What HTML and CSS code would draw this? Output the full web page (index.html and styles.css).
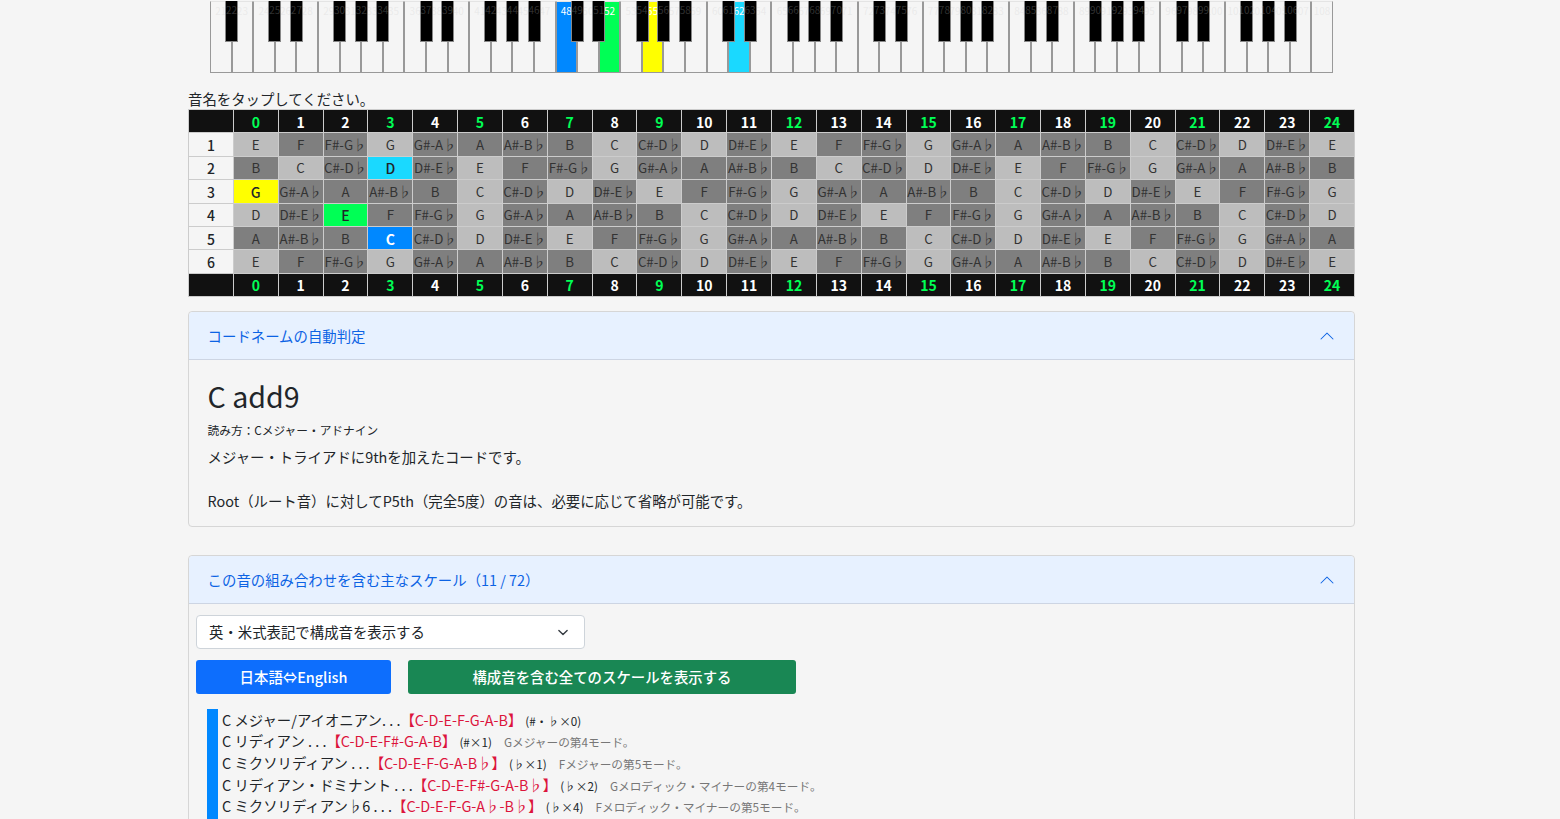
FILE: index.html
```html
<!DOCTYPE html>
<html lang="ja">
<head>
<meta charset="utf-8">
<title>コードネームの自動判定</title>
<link rel="stylesheet" href="styles.css">
</head>
<body>
<div class="page">
  <div class="piano" id="piano"></div>
  <div class="content">
    <p class="hint">音名をタップしてください。</p>
    <table class="board"><tbody id="board"></tbody></table>

    <section class="acc acc-first">
      <header class="acc-head">
        <span>コードネームの自動判定</span>
        <svg class="chev" viewBox="0 0 16 16" width="16" height="16"><path fill="#0c63e4" fill-rule="evenodd" d="M1.646 11.354a.5.5 0 0 0 .708 0L8 5.707l5.646 5.647a.5.5 0 0 0 .708-.708l-6-6a.5.5 0 0 0-.708 0l-6 6a.5.5 0 0 0 0 .708z"/></svg>
      </header>
      <div class="acc-body chord">
        <h2 class="chord-name">C add9</h2>
        <p class="reading">読み方：Cメジャー・アドナイン</p>
        <p class="desc">メジャー・トライアドに9thを加えたコードです。<br><br>Root（ルート音）に対してP5th（完全5度）の音は、必要に応じて省略が可能です。</p>
      </div>
    </section>

    <section class="acc acc-second">
      <header class="acc-head">
        <span>この音の組み合わせを含む主なスケール（11 / 72）</span>
        <svg class="chev" viewBox="0 0 16 16" width="16" height="16"><path fill="#0c63e4" fill-rule="evenodd" d="M1.646 11.354a.5.5 0 0 0 .708 0L8 5.707l5.646 5.647a.5.5 0 0 0 .708-.708l-6-6a.5.5 0 0 0-.708 0l-6 6a.5.5 0 0 0 0 .708z"/></svg>
      </header>
      <div class="acc-body scales">
        <div class="select">
          <span>英・米式表記で構成音を表示する</span>
          <svg viewBox="0 0 16 16" width="14" height="11"><path fill="none" stroke="#343a40" stroke-linecap="round" stroke-linejoin="round" stroke-width="2" d="M2 5l6 6 6-6"/></svg>
        </div>
        <div class="btns">
          <button class="btn btn-blue">日本語⇔English</button>
          <button class="btn btn-green">構成音を含む全てのスケールを表示する</button>
        </div>
        <ul class="list">
          <li>C メジャー/アイオニアン. . .<b>【C-D-E-F-G-A-B】</b><small>(#・♭×0)</small></li>
          <li>C リディアン . . .<b>【C-D-E-F#-G-A-B】</b><small>(#×1)</small><i>Gメジャーの第4モード。</i></li>
          <li>C ミクソリディアン . . .<b>【C-D-E-F-G-A-B♭】</b><small>(♭×1)</small><i>Fメジャーの第5モード。</i></li>
          <li>C リディアン・ドミナント . . .<b>【C-D-E-F#-G-A-B♭】</b><small>(♭×2)</small><i>Gメロディック・マイナーの第4モード。</i></li>
          <li>C ミクソリディアン♭6 . . .<b>【C-D-E-F-G-A♭-B♭】</b><small>(♭×4)</small><i>Fメロディック・マイナーの第5モード。</i></li>
        </ul>
      </div>
    </section>
  </div>
</div>
<script src="app.js"></script>
</body>
</html>
```
FILE: styles.css
```css
* { box-sizing: border-box; }
html, body { margin: 0; height: 819px; overflow: hidden; }
body {
  background: #f5f5f5;
  color: #212529;
  font-family: "Noto Sans CJK JP", "Noto Sans", sans-serif;
  font-size: 14.4px;
  line-height: 1.5;
}
.page { width: 1543px; }

/* piano */
.piano {
  position: relative;
  display: flex;
  width: 1123px;
  height: 73px;
  margin: 0 auto;
  padding-top: 1px;
}
.wk {
  position: relative;
  flex: 0 0 21.6px;
  border: 1px solid #999;
  border-top-color: #e4e4e4;
  font-size: 10px;
  line-height: 14px;
  text-align: center;
  color: rgba(200, 200, 200, .25);
  padding-top: 2px;
  white-space: nowrap;
}
.wk.on { color: #fff; }
.c-blue { background: #0088ff; }
.c-green { background: #00ff55; }
.c-yellow { background: #ffff00; }
.c-cyan { background: #1ad9ff; }
.bk {
  position: absolute;
  z-index: 1;
  top: 1px;
  width: 13px;
  height: 41px;
  background: #000;
  border: 1px solid #888;
  border-top: 0;
  font-size: 10px;
  line-height: 18px;
  text-align: center;
  color: rgba(200, 200, 200, .25);
  white-space: nowrap;
  display: flex;
  justify-content: center;
}

/* content */
.content { width: 1167px; margin: 0 auto; }
.hint { margin: 15px 0 0; height: 21px; line-height: 22px; }
.board {
  width: 100%;
  table-layout: fixed;
  border-collapse: collapse;
}
.board td {
  height: 23.4px;
  padding: 1px 0 0;
  border: 1px solid #ccc;
  text-align: center;
  font-size: 13.3px;
  line-height: 16px;
  color: #333;
  white-space: nowrap;
  overflow: hidden;
}
.board .hd { background: #111; color: #fff; font-weight: 700; font-size: 14px; }
.board .hd.mark { color: #00ff55; }
.board .lbl { background: #f5f5f5; color: #212529; font-weight: 500; font-size: 14px; }
.board .lt { background: #bdbdbd; }
.board .dk { background: #7f7f7f; }
.board .sel { font-weight: 500; color: #212529; font-size: 14px; }
.board .c-blue { color: #fff; font-weight: 700; }

/* accordion */
.acc {
  border: 1px solid #d6d6d6;
  border-radius: 4px;
}
.acc-first { margin-top: 14px; }
.acc-second { margin-top: 28px; }
.acc-head {
  display: flex;
  align-items: center;
  justify-content: space-between;
  height: 48px;
  padding: 0 19px 0 18.6px;
  background: #e7f1ff;
  color: #0c63e4;
  border-bottom: 1px solid #cdd5e3;
  border-radius: 4px 4px 0 0;
}
.chord { padding: 14px 19px 14px 18.6px; }
.chord-name { margin: 0; font-size: 28.6px; font-weight: 400; line-height: 44px; }
.reading { margin: 3px 0 0; font-size: 11.7px; line-height: 18px; }
.desc { margin: 7px 0 0; line-height: 22px; }

.scales { padding: 11px 7px 0; }
.select {
  display: flex;
  align-items: center;
  justify-content: space-between;
  width: 389px;
  height: 34px;
  padding: 0 14px 0 12px;
  background: #fff;
  border: 1px solid #ced4da;
  border-radius: 4px;
}
.btns { display: flex; gap: 17px; margin-top: 11px; }
.btn {
  height: 34px;
  padding: 0;
  border: 0;
  border-radius: 3px;
  color: #fff;
  font: 500 14.4px/1.5 "Noto Sans CJK JP", sans-serif;
}
.btn-blue { width: 195px; background: #0d6efd; }
.btn-green { width: 388px; background: #198754; }
.list {
  list-style: none;
  margin: 14.6px 0 0 11px;
  padding: 0 0 40px 4px;
  border-left: 11px solid #0088ff;
  white-space: nowrap;
}
.list li { height: 21.6px; line-height: 21.6px; }
.list b { font-weight: 400; color: #dc143c; }
.list small { font-size: 11.7px; line-height: 1; margin-left: 3px; }
.list i { font-style: normal; font-size: 11.7px; line-height: 1; color: #777; margin-left: 12px; }
```
FILE: app.js
```js
var names = ["C", "C#-D♭", "D", "D#-E♭", "E", "F", "F#-G♭", "G", "G#-A♭", "A", "A#-B♭", "B"];
var lit = { "C": 1, "D": 1, "E": 1, "G": 1 };

/* fretboard */
var tuning = [4, 11, 7, 2, 9, 4];
var picked = { "1,3": "c-cyan", "2,0": "c-yellow", "3,2": "c-green", "4,3": "c-blue" };
var marks = [0, 3, 5, 7, 9, 12, 15, 17, 19, 21, 24];
function headerRow() {
  var h = '<tr><td class="hd"></td>';
  for (var f = 0; f <= 24; f++) {
    h += '<td class="hd' + (marks.indexOf(f) >= 0 ? " mark" : "") + '">' + f + "</td>";
  }
  return h + "</tr>";
}
var html = headerRow();
tuning.forEach(function (open, s) {
  html += '<tr><td class="lbl">' + (s + 1) + "</td>";
  for (var f = 0; f <= 24; f++) {
    var n = names[(open + f) % 12];
    var p = picked[s + "," + f];
    html += '<td class="' + (p ? "sel " + p : lit[n] ? "lt" : "dk") + '">' + n + "</td>";
  }
  html += "</tr>";
});
document.getElementById("board").innerHTML = html + headerRow();

/* piano: MIDI 21..108 */
var on = { 48: "c-blue", 52: "c-green", 55: "c-yellow", 62: "c-cyan" };
var blackPc = { 1: 1, 3: 1, 6: 1, 8: 1, 10: 1 };
var keys = "", whites = 0;
for (var m = 21; m <= 108; m++) {
  if (blackPc[m % 12]) {
    keys += '<div class="bk" style="left:' + (whites * 21.6 - 6.5) + 'px">' + m + "</div>";
  } else {
    keys += '<div class="wk' + (on[m] ? " on " + on[m] : "") + '">' + m + "</div>";
    whites++;
  }
}
document.getElementById("piano").innerHTML = keys;
```
